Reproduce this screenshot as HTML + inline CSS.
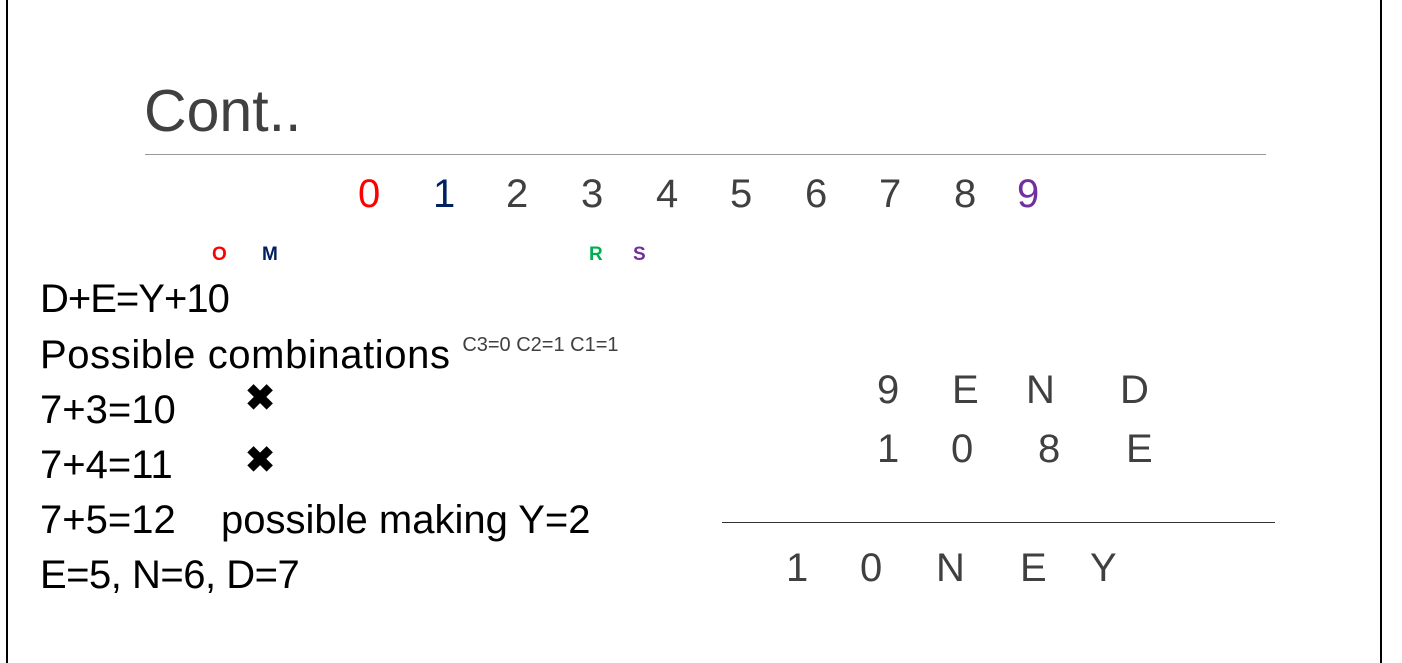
<!DOCTYPE html>
<html><head><meta charset="utf-8"><style>
body{margin:0;width:1402px;height:663px;background:#fff;position:relative;overflow:hidden;font-family:"Liberation Sans",sans-serif}
.a{position:absolute;white-space:nowrap;line-height:1}
.g{color:#404040}
.t{font-size:40px;color:#000}
</style></head><body>
<div style="position:absolute;left:6px;top:0;width:2px;height:663px;background:#000"></div>
<div style="position:absolute;left:1380px;top:0;width:2px;height:663px;background:#000"></div>
<div class="a g" style="left:144px;top:82px;font-size:59px">Cont..</div>
<div style="position:absolute;left:145px;top:154px;width:1121px;height:1px;background:#999"></div>
<div class="a g" style="top:174px;font-size:40px;left:0;width:1402px">
<span class="a" style="left:358px;color:#f00">0</span>
<span class="a" style="left:433px;color:#002060">1</span>
<span class="a" style="left:506px">2</span>
<span class="a" style="left:581px">3</span>
<span class="a" style="left:656px">4</span>
<span class="a" style="left:730px">5</span>
<span class="a" style="left:805px">6</span>
<span class="a" style="left:879px">7</span>
<span class="a" style="left:954px">8</span>
<span class="a" style="left:1017px;color:#7030a0">9</span>
</div>
<div class="a" style="left:212px;top:245px;font-size:19px;font-weight:bold;color:#f00">O</div>
<div class="a" style="left:262px;top:245px;font-size:19px;font-weight:bold;color:#002060">M</div>
<div class="a" style="left:589px;top:245px;font-size:19px;font-weight:bold;color:#00b050">R</div>
<div class="a" style="left:633px;top:245px;font-size:19px;font-weight:bold;color:#7030a0">S</div>
<div class="a t" style="left:40px;top:279px;letter-spacing:-1px">D+E=Y+10</div>
<div class="a t" style="left:40px;top:335px;letter-spacing:0.6px">Possible combinations <span style="font-size:20px;color:#404040;vertical-align:17px;letter-spacing:0">C3=0 C2=1 C1=1</span></div>
<div class="a t" style="left:40px;top:390px">7+3=10</div>
<div class="a" style="left:245px;top:380px;font-size:36px;font-weight:bold">✖</div>
<div class="a t" style="left:40px;top:445px">7+4=11</div>
<div class="a" style="left:245px;top:442px;font-size:36px;font-weight:bold">✖</div>
<div class="a t" style="left:40px;top:500px">7+5=12</div>
<div class="a t" style="left:221px;top:500px">possible making Y=2</div>
<div class="a t" style="left:40px;top:555px;letter-spacing:-0.5px">E=5, N=6, D=7</div>
<div class="a g" style="font-size:40px;top:370px;left:0;width:1402px">
<span class="a" style="left:877px">9</span><span class="a" style="left:952px">E</span><span class="a" style="left:1026px">N</span><span class="a" style="left:1120px">D</span>
</div>
<div class="a g" style="font-size:40px;top:429px;left:0;width:1402px">
<span class="a" style="left:877px">1</span><span class="a" style="left:951px">0</span><span class="a" style="left:1038px">8</span><span class="a" style="left:1126px">E</span>
</div>
<div style="position:absolute;left:722px;top:522px;width:553px;height:1px;background:#333"></div>
<div class="a g" style="font-size:40px;top:548px;left:0;width:1402px">
<span class="a" style="left:786px">1</span><span class="a" style="left:860px">0</span><span class="a" style="left:936px">N</span><span class="a" style="left:1020px">E</span><span class="a" style="left:1090px">Y</span>
</div>
</body></html>
